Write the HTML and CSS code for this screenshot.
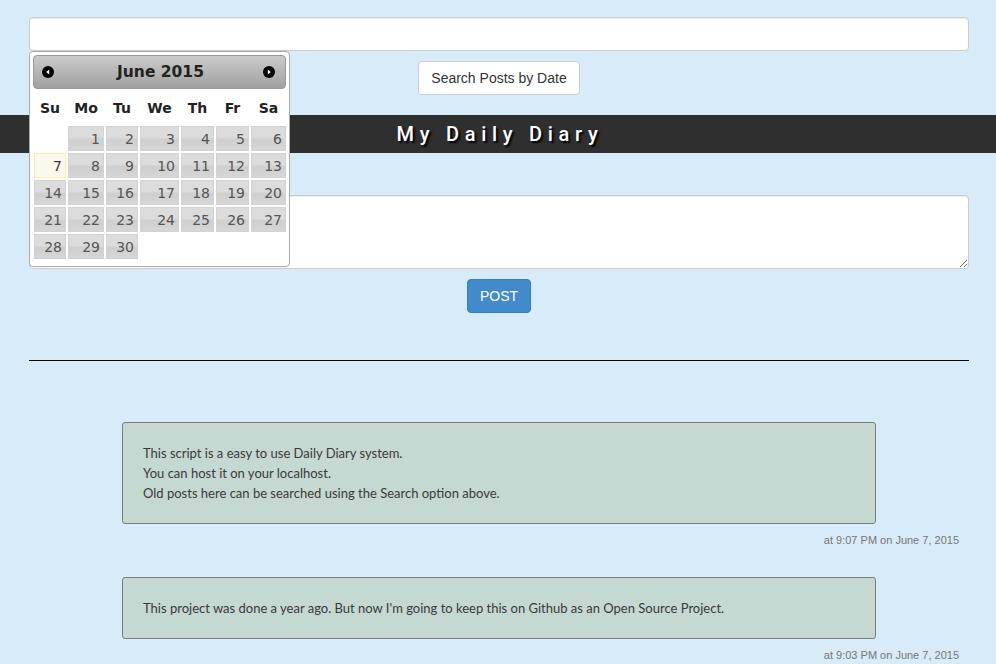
FILE: index.html
```html
<!DOCTYPE html>
<html lang="en">
<head>
<meta charset="utf-8">
<title>My Daily Diary</title>
<link rel="stylesheet" href="styles.css">
</head>
<body>
<div class="search-area">
  <div class="container picker-anchor">
    <input class="date-input" type="text">
    <div class="search-actions">
      <button class="btn btn-default" type="button">Search Posts by Date</button>
    </div>
    <div class="datepicker">
      <div class="dp-header">
        <span class="dp-nav dp-prev"><svg width="12" height="12" viewBox="0 0 12 12"><circle cx="6" cy="6" r="6" fill="#000"/><path d="M7.2 3.4 L4.2 6 L7.2 8.6 Z" fill="#fff"/></svg></span>
        <span class="dp-title">June 2015</span>
        <span class="dp-nav dp-next"><svg width="12" height="12" viewBox="0 0 12 12"><circle cx="6" cy="6" r="6" fill="#000"/><path d="M4.8 3.4 L7.8 6 L4.8 8.6 Z" fill="#fff"/></svg></span>
      </div>
      <div class="dp-grid">
        <div class="dp-dow">Su</div><div class="dp-dow">Mo</div><div class="dp-dow">Tu</div><div class="dp-dow">We</div><div class="dp-dow">Th</div><div class="dp-dow">Fr</div><div class="dp-dow">Sa</div>
        <div class="dp-empty"></div><div class="dp-day">1</div><div class="dp-day">2</div><div class="dp-day">3</div><div class="dp-day">4</div><div class="dp-day">5</div><div class="dp-day">6</div>
        <div class="dp-day dp-today">7</div><div class="dp-day">8</div><div class="dp-day">9</div><div class="dp-day">10</div><div class="dp-day">11</div><div class="dp-day">12</div><div class="dp-day">13</div>
        <div class="dp-day">14</div><div class="dp-day">15</div><div class="dp-day">16</div><div class="dp-day">17</div><div class="dp-day">18</div><div class="dp-day">19</div><div class="dp-day">20</div>
        <div class="dp-day">21</div><div class="dp-day">22</div><div class="dp-day">23</div><div class="dp-day">24</div><div class="dp-day">25</div><div class="dp-day">26</div><div class="dp-day">27</div>
        <div class="dp-day">28</div><div class="dp-day">29</div><div class="dp-day">30</div>
      </div>
    </div>
  </div>
</div>

<header class="title-bar">
  <h1 class="title">My Daily Diary</h1>
</header>

<div class="container">
  <textarea class="post-input"></textarea>
  <div class="post-actions">
    <button class="btn btn-primary" type="button">POST</button>
  </div>
  <hr class="divider">

  <div class="posts">
    <div class="post">
      <div class="post-body">
        This script is a easy to use Daily Diary system.<br>
        You can host it on your localhost.<br>
        Old posts here can be searched using the Search option above.
      </div>
      <div class="post-time">at 9:07 PM on June 7, 2015</div>
    </div>
    <div class="post">
      <div class="post-body">
        This project was done a year ago. But now I'm going to keep this on Github as an Open Source Project.
      </div>
      <div class="post-time">at 9:03 PM on June 7, 2015</div>
    </div>
  </div>
</div>
</body>
</html>
```

FILE: styles.css
```css
* { box-sizing: border-box; }

html, body {
  margin: 0;
  padding: 0;
}

body {
  background: #d7ebf9;
  font-family: "Liberation Sans", Arial, sans-serif;
  font-size: 14px;
  color: #333;
  overflow: hidden;
}

.container {
  width: 942px;
  padding-left: 2px;
  margin: 0 auto;
}

.search-area {
  padding-top: 17px;
}

.picker-anchor {
  position: relative;
}

.date-input {
  display: block;
  width: 100%;
  height: 34px;
  border: 1px solid #ccc;
  border-radius: 4px;
  background: #fff;
  box-shadow: inset 0 1px 1px rgba(0,0,0,.075);
  margin: 0;
}

.search-actions,
.post-actions {
  display: flex;
  justify-content: center;
  margin-top: 10px;
}

.btn {
  font-family: "Liberation Sans", Arial, sans-serif;
  font-size: 14px;
  line-height: 20px;
  padding: 6px 12px;
  border-radius: 4px;
  border: 1px solid #ccc;
  cursor: pointer;
}

.btn-default {
  background: #fff;
  color: #333;
}

.btn-primary {
  background: #428bca;
  border-color: #357ebd;
  color: #fff;
}

.title-bar {
  margin-top: 20px;
  height: 38px;
  background: #2f2f2f;
  display: flex;
  align-items: center;
  justify-content: center;
}

.title {
  margin: 0;
  padding-left: 4px;
  font-family: Roboto, "Liberation Sans", sans-serif;
  font-weight: 500;
  font-size: 20px;
  letter-spacing: 5.7px;
  color: #fff;
  text-shadow: 2px 2px 2px #000;
}

.post-input {
  display: block;
  width: 100%;
  height: 74px;
  margin-top: 42px;
  border: 1px solid #ccc;
  border-radius: 4px;
  background: #fff;
  box-shadow: inset 0 1px 1px rgba(0,0,0,.075);
  resize: vertical;
}

.divider {
  margin: 47px 0 0;
  border: 0;
  border-top: 1px solid #000;
  height: 0;
}

.posts {
  padding-top: 61px;
}

.post {
  display: flex;
  flex-direction: column;
  margin-bottom: 15px;
}

.post-body {
  width: 754px;
  align-self: center;
  background: #c5d8d2;
  border: 1px solid #7b7b7b;
  border-radius: 3px;
  padding: 20px;
  font-family: Lato, "Open Sans", sans-serif;
  font-size: 13px;
  line-height: 20px;
  color: #3a3a3a;
}

.post-time {
  text-align: right;
  padding-right: 10px;
  margin-top: 9px;
  font-size: 11px;
  line-height: 15px;
  color: #777;
  margin-bottom: 14px;
}

/* Datepicker overlay */
.datepicker {
  position: absolute;
  left: 2px;
  top: 34px;
  width: 261px;
  background: #fff;
  border: 1px solid #aaa;
  border-radius: 4px;
  padding: 3px 3px 7px 3px;
  font-family: "DejaVu Sans", Verdana, sans-serif;
  z-index: 10;
}

.dp-header {
  height: 34px;
  border: 1px solid #999;
  border-radius: 4px;
  background: linear-gradient(#cbcbcb, #a0a0a0);
  display: flex;
  align-items: center;
  justify-content: space-between;
  padding: 0 10px 0 8px;
}

.dp-nav {
  display: flex;
  width: 12px;
  height: 12px;
}

.dp-title {
  font-weight: bold;
  font-size: 15.5px;
  color: #222;
  margin-left: 4px;
}

.dp-grid {
  display: grid;
  grid-template-columns: 32px 36px 32px 39px 33px 33px 35px;
  grid-template-rows: 35px;
  grid-auto-rows: 25px;
  gap: 2px;
  padding: 0 1px;
}

.dp-dow {
  display: flex;
  align-items: center;
  justify-content: center;
  font-weight: bold;
  font-size: 14px;
  color: #222;
  padding-top: 2px;
}

.dp-day {
  border: 1px solid #d3d3d3;
  background: linear-gradient(#dcdcdc 0%, #dcdcdc 45%, #cfcfcf 55%, #d6d6d6 100%);
  color: #555;
  font-size: 14px;
  text-align: right;
  padding-right: 3px;
  line-height: 24px;
}

.dp-today {
  border-color: #fcefa1;
  background: #fbf9ee;
  color: #363636;
}
```
